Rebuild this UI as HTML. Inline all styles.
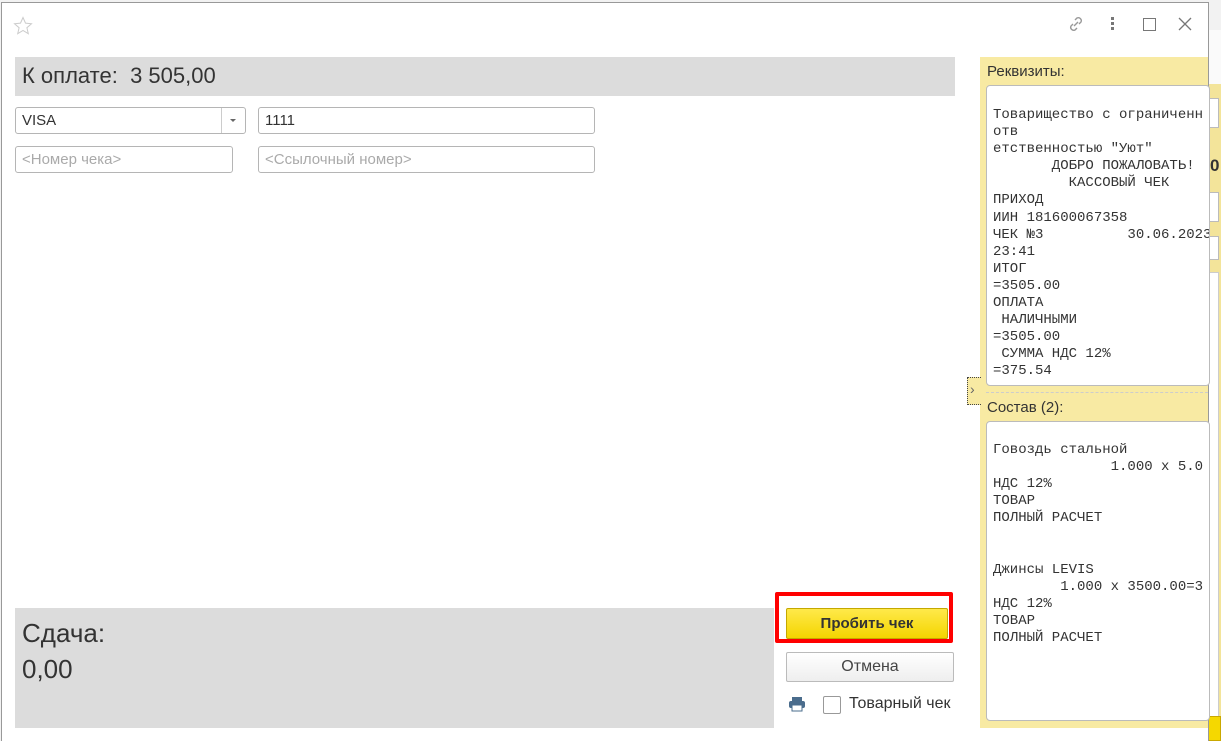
<!DOCTYPE html>
<html style="overflow:hidden;height:741px"><head><meta charset="utf-8"><style>
*{box-sizing:border-box;margin:0;padding:0}
body{width:1221px;height:741px;overflow:hidden;background:#f2f2f2;font-family:"Liberation Sans",Arial,sans-serif;position:relative;color:#333}
.a{position:absolute}
.win{left:1px;top:2px;width:1208px;height:745px;background:#fff;border:1px solid #999}
.inp{background:#fff;border:1px solid #b5b5b5;border-radius:3px;font-size:15px;padding:4px 6px;height:27px}
.mono{font-family:"Liberation Mono","Courier New",monospace;font-size:14px;line-height:17.1px;color:#333;white-space:pre;overflow:hidden;background:#fff;border:1px solid #bbb;border-radius:4px;padding:0 6px}
</style></head><body>
<div class="a" style="left:1208px;top:30px;width:13px;height:711px;background:#fafafa"></div>
<div class="a" style="left:1208px;top:84px;width:13px;height:650px;background:#f3e49a"></div>
<div class="a" style="left:1208px;top:98px;width:11px;height:30px;background:#fff;border:1px solid #bbb"></div>
<div class="a" style="left:1208px;top:192px;width:11px;height:30px;background:#fff;border:1px solid #bbb"></div>
<div class="a" style="left:1208px;top:236px;width:11px;height:24px;background:#fff;border:1px solid #bbb"></div>
<div class="a" style="left:1208px;top:272px;width:11px;height:450px;background:#fff;border:1px solid #ccc"></div>
<div class="a" style="left:1210px;top:156px;font-size:17px;font-weight:bold;color:#333">0</div>
<div class="a" style="left:1208px;top:716px;width:13px;height:25px;background:#f5d800;border:1px solid #c9a800"></div>

<div class="a win"></div>
<svg class="a" style="left:13px;top:16px" width="20" height="20" viewBox="0 0 20 20"><path d="M10 1.5l2.5 5.6 6 .6-4.6 4 1.4 6-5.3-3.2-5.3 3.2 1.4-6-4.6-4 6-.6z" fill="none" stroke="#ccc" stroke-width="1"/></svg>
<svg class="a" style="left:1066px;top:14px" width="20" height="20" viewBox="0 0 20 20" fill="none" stroke="#999" stroke-width="1.4"><path d="M8 12l4-4"/><path d="M9 6l2-2a3 3 0 014 4l-2 2"/><path d="M11 14l-2 2a3 3 0 01-4-4l2-2"/></svg>
<div class="a" style="left:1111px;top:17px;width:3px;height:3px;background:#777;box-shadow:0 5px 0 #777,0 10px 0 #777"></div>
<div class="a" style="left:1143px;top:18px;width:13px;height:13px;border:1.5px solid #777"></div>
<svg class="a" style="left:1178px;top:17px" width="14" height="14"><path d="M1 1l12 12M13 1L1 13" stroke="#777" stroke-width="1.3"/></svg>

<div class="a" style="left:15px;top:57px;width:940px;height:39px;background:#dcdcdc;font-size:22px;padding:6px 7px;color:#333">К оплате:&nbsp; 3 505,00</div>
<div class="a inp" style="left:15px;top:107px;width:231px;color:#333">VISA</div>
<div class="a" style="left:221px;top:108px;width:1px;height:25px;background:#ccc"></div>
<div class="a" style="left:230px;top:119px;border-left:3px solid transparent;border-right:3px solid transparent;border-top:3px solid #666"></div>
<div class="a inp" style="left:258px;top:107px;width:337px">1111</div>
<div class="a inp" style="left:15px;top:146px;width:218px;color:#aaa">&lt;Номер чека&gt;</div>
<div class="a inp" style="left:258px;top:146px;width:337px;color:#aaa">&lt;Ссылочный номер&gt;</div>

<div class="a" style="left:15px;top:608px;width:759px;height:120px;background:#dcdcdc;font-size:26px;line-height:36px;padding:7px 7px;color:#333">Сдача:<br>0,00</div>

<div class="a" style="left:775px;top:592px;width:178px;height:51px;border:4px solid #f00;border-radius:2px"></div>
<div class="a" style="left:786px;top:608px;width:162px;height:31px;background:linear-gradient(#ffe94a,#f4d500);border:1px solid #c4a800;border-radius:2px;font-size:15px;font-weight:bold;text-align:center;line-height:29px;color:#333">Пробить чек</div>
<div class="a" style="left:786px;top:652px;width:168px;height:30px;background:linear-gradient(#fff,#eee);border:1px solid #bbb;border-radius:2px;font-size:16px;text-align:center;line-height:28px;color:#444">Отмена</div>
<svg class="a" style="left:788px;top:696px" width="18" height="16" viewBox="0 0 18 16"><rect x="4" y="1" width="10" height="4" fill="#4a6c8c"/><rect x="1" y="5" width="16" height="7" rx="2" fill="#4a6c8c"/><rect x="4" y="9" width="10" height="6" fill="#fff" stroke="#4a6c8c"/></svg>
<div class="a" style="left:823px;top:696px;width:18px;height:18px;border:1px solid #999;border-radius:2px;background:#fff"></div>
<div class="a" style="left:849px;top:695px;font-size:16px;color:#333">Товарный чек</div>

<div class="a" style="left:980px;top:57px;width:228px;height:671px;background:#f8eaa3"></div>
<div class="a" style="left:987px;top:63px;font-size:15px;color:#333">Реквизиты:</div>
<div class="a mono" style="left:986px;top:85px;width:224px;height:301px;padding-top:21px">Товарищество с ограниченн
отв
етственностью "Уют"
       ДОБРО ПОЖАЛОВАТЬ!
         КАССОВЫЙ ЧЕК
ПРИХОД
ИИН 181600067358
ЧЕК №3          30.06.2023
23:41
ИТОГ
=3505.00
ОПЛАТА
 НАЛИЧНЫМИ
=3505.00
 СУММА НДС 12%
=375.54</div>
<div class="a" style="left:986px;top:392px;width:222px;border-top:1px dashed #ccc"></div>
<div class="a" style="left:967px;top:377px;width:14px;height:28px;border:1px dotted #444;border-right:none;background:#f8eaa3;font-size:14px;color:#666;padding:3px 0 0 2px">›</div>
<div class="a" style="left:987px;top:399px;font-size:15px;color:#333">Состав (2):</div>
<div class="a mono" style="left:986px;top:421px;width:224px;height:300px;padding-top:20px">Говоздь стальной
              1.000 x 5.0
НДС 12%
ТОВАР
ПОЛНЫЙ РАСЧЕТ


Джинсы LEVIS
        1.000 x 3500.00=3
НДС 12%
ТОВАР
ПОЛНЫЙ РАСЧЕТ</div>
</body></html>
